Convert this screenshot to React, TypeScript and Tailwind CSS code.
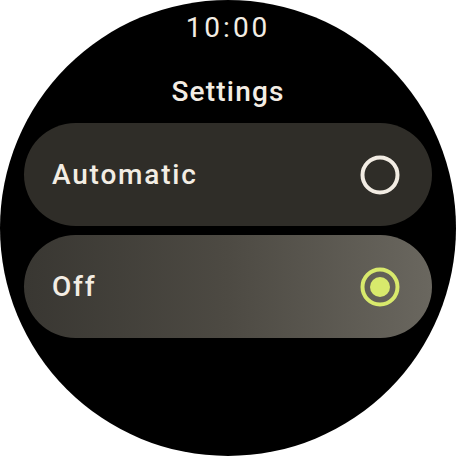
import React from "react";

function Radio({ selected }: { selected: boolean }) {
  const c = selected ? "#d8e96c" : "#f2ece3";
  return (
    <svg width="40" height="40" viewBox="0 0 40 40">
      <circle cx="20" cy="20" r="17.5" fill="none" stroke={c} strokeWidth="4" />
      {selected && <circle cx="20" cy="20" r="10" fill={c} />}
    </svg>
  );
}

export default function App() {
  return (
    <div className="w-[456px] h-[456px] bg-white" style={{ fontFamily: "Roboto, 'Noto Sans', sans-serif" }}>
      <div className="w-[456px] h-[456px] rounded-full bg-black overflow-hidden flex flex-col items-center text-[#f3ede4]">
        <div className="mt-[14px] h-[28px] text-[28px] leading-[28px] tracking-[3px] font-normal">10:00</div>
        <div className="mt-[36px] h-[28px] text-[28px] leading-[28px] tracking-[1.2px] font-medium">Settings</div>
        <div className="mt-[17px] w-[408px] h-[103px] rounded-full bg-[#2f2d28] flex items-center justify-between pl-[28px] pr-[32px]">
          <span className="text-[28px] leading-[28px] tracking-[1.8px] font-medium">Automatic</span>
          <Radio selected={false} />
        </div>
        <div className="mt-[9px] w-[408px] h-[103px] rounded-full bg-gradient-to-r from-[#393732] via-[#4d4a43] to-[#6a675f] flex items-center justify-between pl-[28px] pr-[32px]">
          <span className="text-[28px] leading-[28px] tracking-[1.8px] font-medium">Off</span>
          <Radio selected={true} />
        </div>
      </div>
    </div>
  );
}
